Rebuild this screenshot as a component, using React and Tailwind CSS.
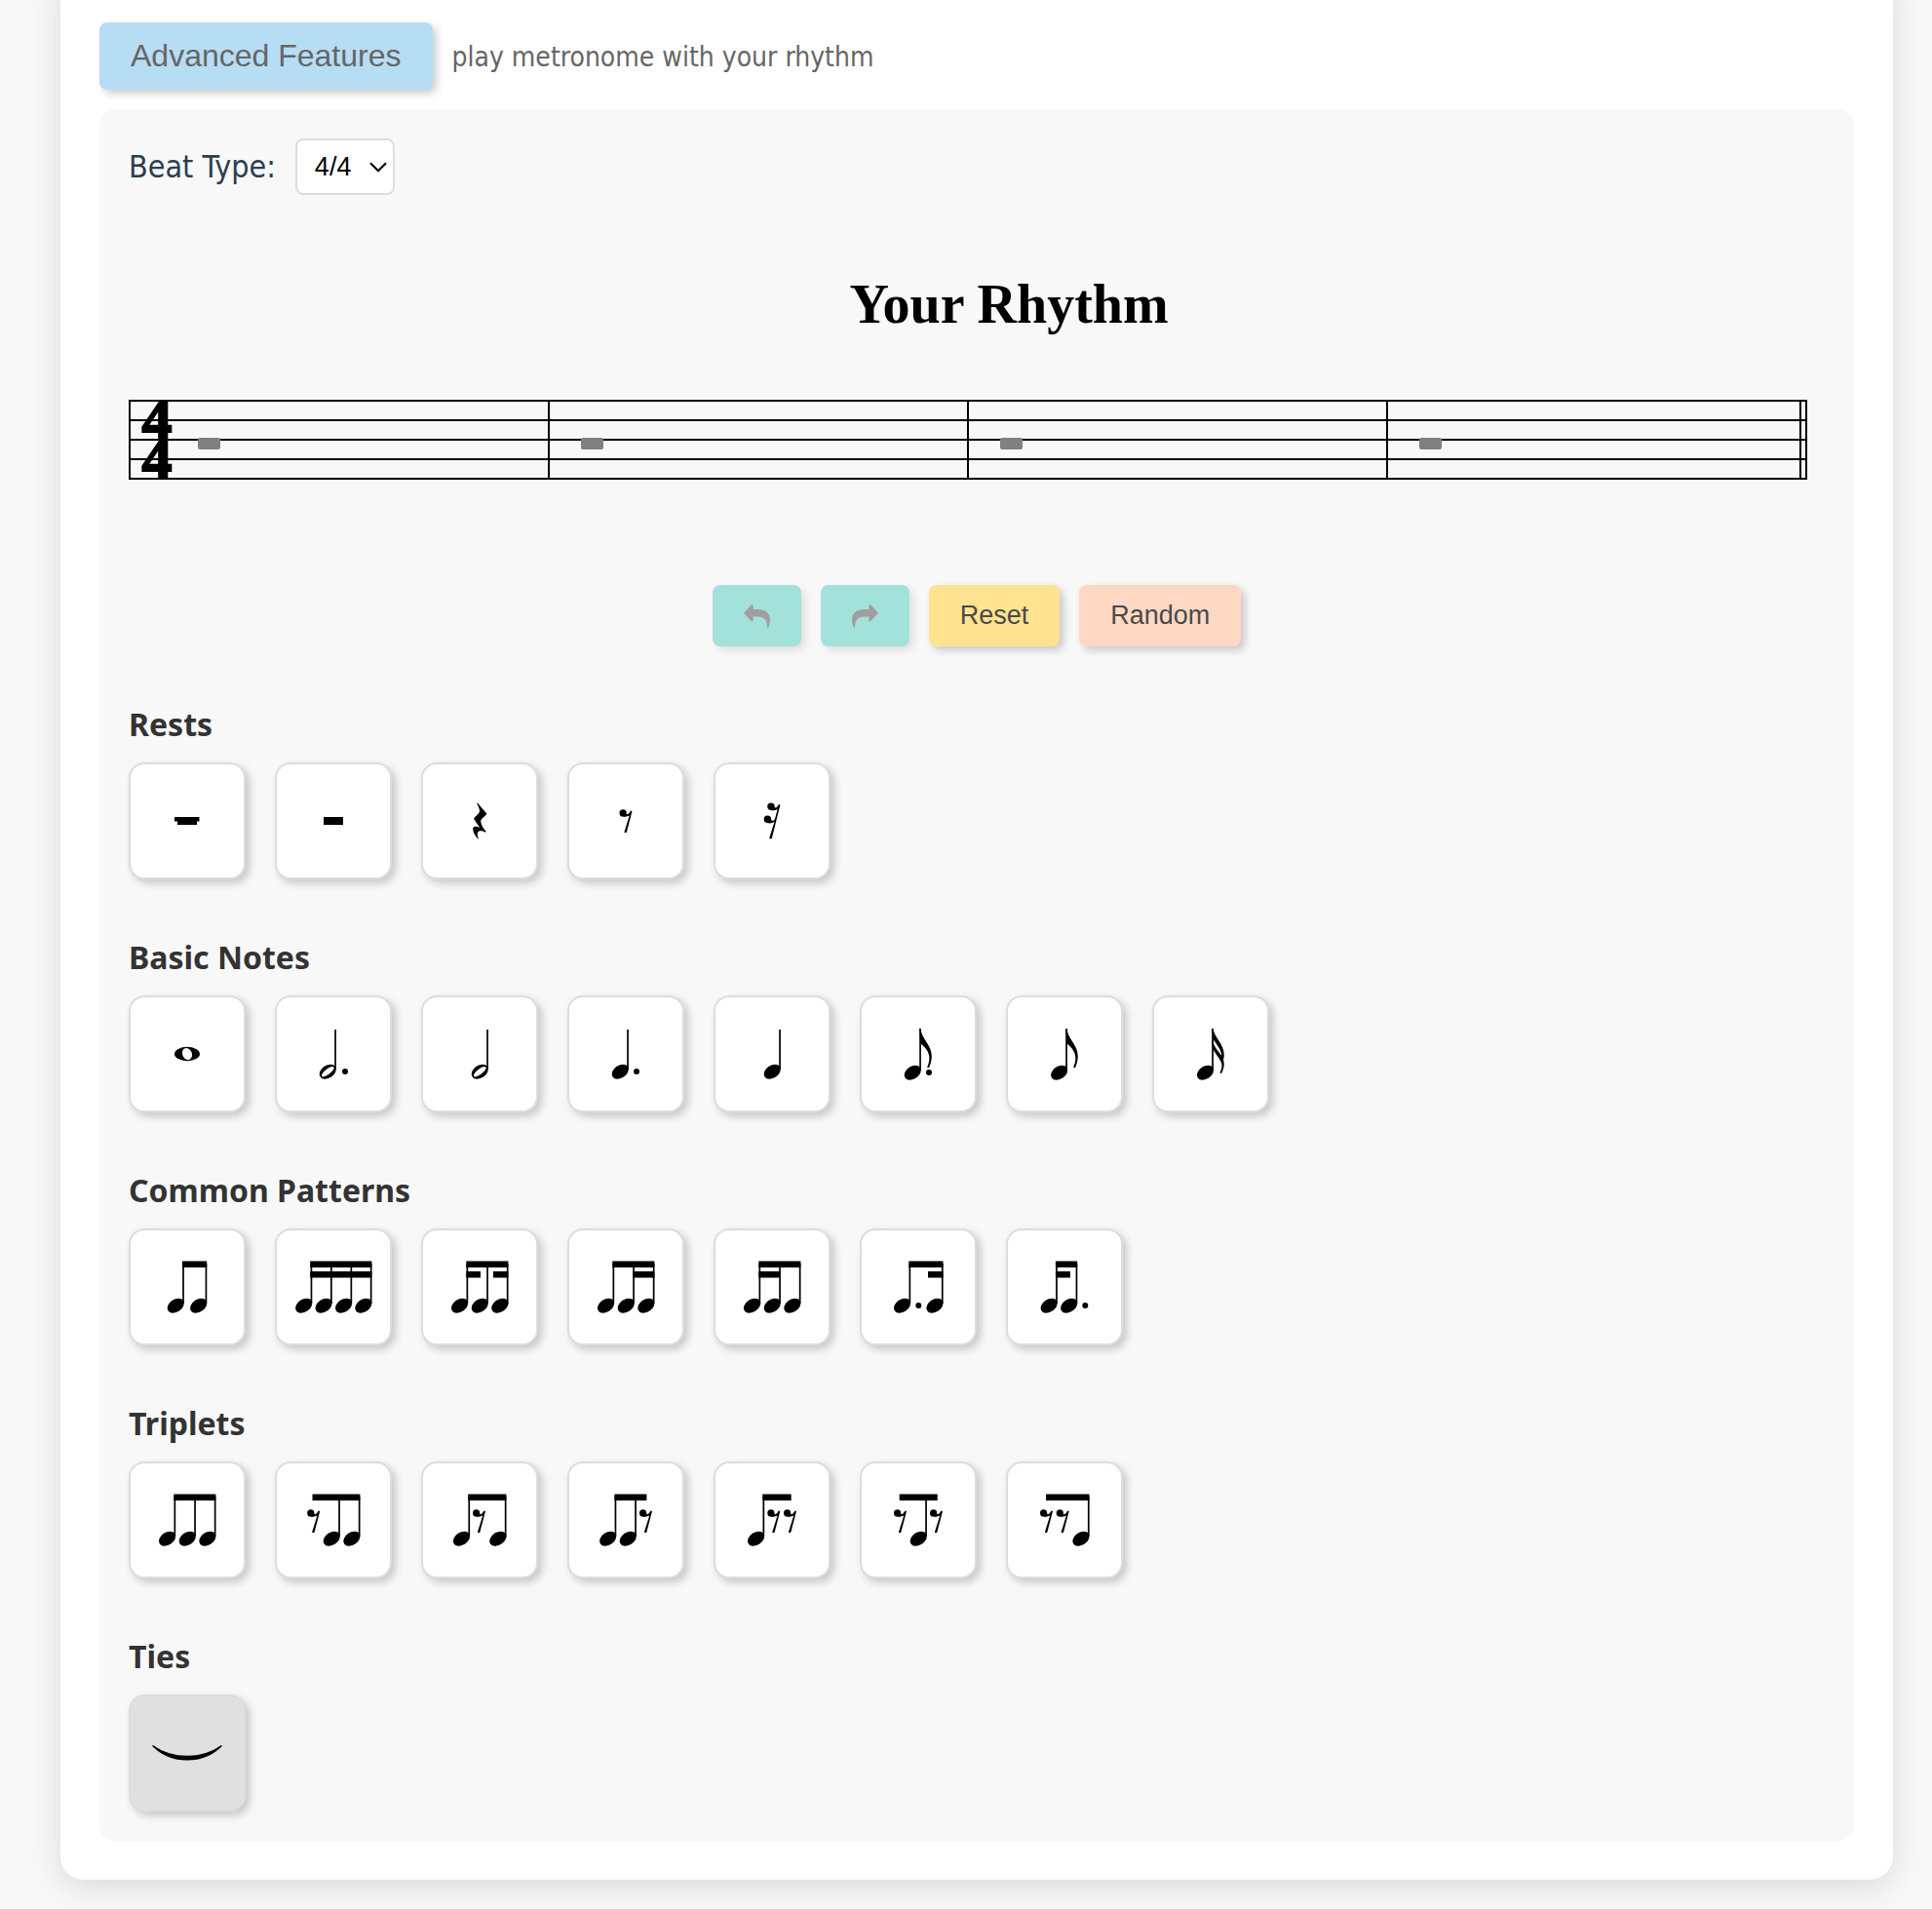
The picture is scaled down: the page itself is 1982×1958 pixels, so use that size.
import { useState } from "react";

// ---- notation primitives, all drawn on a 120x120 tile ----

function Head({ x, y = 79, hollow = false }) {
  return (
    <g transform={`translate(${x + 0.3} ${y + 0.2})`}>
      <ellipse rx="9.4" ry="6.5" transform="rotate(-34)" />
      {hollow && <ellipse rx="7.8" ry="2.7" transform="rotate(-38)" fill="#fff" />}
    </g>
  );
}

function Stem({ x, top = 36, bottom = 77 }) {
  return <rect x={x + 7.2} y={top} width="1.7" height={bottom - top} />;
}

function Dot({ x, y = 79 }) {
  return <circle cx={x} cy={y} r="3" />;
}

function EighthRest({ x, y = 49 }) {
  return (
    <g transform={`translate(${x} ${y})`}>
      <circle cx="3.6" cy="3.9" r="3.6" />
      <path d="M11.5 1.6 L13 2 L7.3 23.7 Q6 24.5 4.9 23.5 L10.2 6.6 Q7 8.4 3.4 7.4 Q6.4 6.6 7.1 4.2 Q8.4 7 11.5 1.6 Z" />
    </g>
  );
}

function Beam({ from, to, second = false }) {
  return <rect x={from} y={second ? 44 : 33.5} width={to - from} height="6.5" />;
}

// heads / rests / dots are x positions; beam and subs are [from, to] pairs
function Beamed({ heads, rests = [], dots = [], beam, subs = [] }) {
  return (
    <>
      {heads.map((x) => (
        <g key={x}>
          <Head x={x} />
          <Stem x={x} />
        </g>
      ))}
      {rests.map((x) => <EighthRest key={x} x={x} />)}
      {dots.map((x) => <Dot key={x} x={x} />)}
      <Beam from={beam[0]} to={beam[1]} />
      {subs.map(([from, to]) => <Beam key={from} from={from} to={to} second />)}
    </>
  );
}

const eighthFlag = "M61.3 34 H62.6 C63.2 45 73.8 50 73.8 62.5 C73.8 66.5 72.6 70 71.4 73.6 Q70.2 74.8 69.2 73.6 C70.8 70 71.8 66 71.2 62 C70 56 66 52 62.6 49.5 Z";

const sections = [
  {
    title: "Rests",
    items: [
      { name: "Whole rest", art: <path d="M47 56 H72.5 V60.5 H70 V64 H50 V60.5 H47 Z" /> },
      { name: "Half rest", art: <rect x="50" y="56" width="20" height="8" /> },
      {
        name: "Quarter rest",
        art: <path d="M57.9 41.6 C61 45 64 49 67.4 52.4 C66 55.5 61.7 57 61.2 60 C61.2 63 63.7 68 66.7 70.7 L65.7 71.8 C63 70 59.4 69.8 58.2 71.5 C57.2 73.5 58 76 58.9 78 L58.4 78.4 C55.4 75.5 53 71 53.2 67.5 C53.4 65 57.5 65.2 60.2 67 C58.5 64 56 61 54 57.8 C55.5 55 59.6 53 60 50 C60 47 58.5 44.5 57.2 42.2 Z" />,
      },
      { name: "Eighth rest", art: <EighthRest x={53.5} y={48} /> },
      {
        name: "Sixteenth rest",
        art: (
          <>
            <circle cx="59" cy="45.3" r="3.7" />
            <circle cx="55.4" cy="58.3" r="3.7" />
            <path d="M66.9 43 L68.4 43.4 L59.8 77.9 Q58.4 78.8 57.2 77.7 L62.4 61 Q58.6 63.2 55 61.9 Q58.6 61 59 58.6 Q60.6 61.6 63 58 L65.6 48 Q62 50 58.8 48.9 Q61.8 48.2 62.6 45.6 Q64 48.4 66.9 43 Z" />
          </>
        ),
      },
    ],
  },
  {
    title: "Basic Notes",
    items: [
      {
        name: "Whole note",
        art: (
          <>
            <ellipse cx="60" cy="60" rx="13" ry="7.2" />
            <ellipse cx="60" cy="60" rx="4.9" ry="6.1" transform="rotate(-22 60 60)" fill="#fff" />
          </>
        ),
      },
      { name: "Dotted half note", art: <><Head x={54} y={78} hollow /><Stem x={54} top={35} bottom={76} /><Dot x={72} y={78} /></> },
      { name: "Half note", art: <><Head x={60} y={78} hollow /><Stem x={60} top={35} bottom={76} /></> },
      { name: "Dotted quarter note", art: <><Head x={54} y={78} /><Stem x={54} top={35} bottom={76} /><Dot x={71} y={78} /></> },
      { name: "Quarter note", art: <><Head x={60} y={78} /><Stem x={60} top={35} bottom={76} /></> },
      { name: "Dotted eighth note", art: <><Head x={54} /><Stem x={54} top={34} /><path d={eighthFlag} /><Dot x={71} /></> },
      { name: "Eighth note", art: <><Head x={54.4} /><Stem x={54} top={34} /><path d={eighthFlag} /></> },
      {
        name: "Sixteenth note",
        art: (
          <>
            <Head x={54.2} />
            <Stem x={54} top={34} />
            <path d="M61.3 34 H62.6 C63.2 43 73.8 49 73.8 61.5 Q73.6 64.5 72.6 67 L71 65 C72.6 57 66 50.5 62.6 45 Z" />
            <path d="M61.3 46.5 H62.6 C63.2 54 69 57.5 71.8 63 C74.8 69 74 73.5 71.6 79.2 Q70.4 80.6 69.6 79.2 C71 76 71.8 73 71.4 70.5 C70 64.5 65 61 62.6 55 Z" />
          </>
        ),
      },
    ],
  },
  {
    title: "Common Patterns",
    items: [
      { name: "Two eighths", art: <Beamed heads={[48, 71.4]} beam={[55, 80.2]} /> },
      { name: "Four sixteenths", art: <Beamed heads={[29.4, 49.8, 70.3, 90.6]} beam={[36.2, 99.4]} subs={[[36.2, 99.4]]} /> },
      { name: "Sixteenth, eighth, sixteenth", art: <Beamed heads={[39.3, 60, 80.6]} beam={[46.3, 89.4]} subs={[[46.3, 61], [74, 89.4]]} /> },
      { name: "Eighth, two sixteenths", art: <Beamed heads={[39.3, 60, 80.6]} beam={[46.3, 89.4]} subs={[[67, 89.4]]} /> },
      { name: "Two sixteenths, eighth", art: <Beamed heads={[39.3, 60, 80.6]} beam={[46.3, 89.4]} subs={[[46.3, 68.4]]} /> },
      { name: "Dotted eighth, sixteenth", art: <Beamed heads={[43.3, 76.7]} dots={[60.3]} beam={[50.3, 85.5]} subs={[[70, 85.5]]} /> },
      { name: "Sixteenth, dotted eighth", art: <Beamed heads={[43.9, 64.4]} dots={[81.3]} beam={[50.9, 73.2]} subs={[[50.9, 66]]} /> },
    ],
  },
  {
    title: "Triplets",
    items: [
      { name: "Triplet", art: <Beamed heads={[39.3, 60, 80.6]} beam={[46.3, 89.4]} /> },
      { name: "Rest, note, note", art: <Beamed heads={[58, 78.6]} rests={[33.2]} beam={[38.5, 87.4]} /> },
      { name: "Note, rest, note", art: <Beamed heads={[41.2, 78.6]} rests={[53]} beam={[48.2, 87.4]} /> },
      { name: "Note, note, rest", art: <Beamed heads={[41.4, 62]} rests={[74]} beam={[48.4, 81.4]} /> },
      { name: "Note, rest, rest", art: <Beamed heads={[43.3]} rests={[55.3, 72]} beam={[50.3, 79.7]} /> },
      { name: "Rest, note, rest", art: <Beamed heads={[60]} rests={[35, 72]} beam={[40.7, 79.7]} /> },
      { name: "Rest, rest, note", art: <Beamed heads={[76.7]} rests={[35, 51.7]} beam={[41, 85.5]} /> },
    ],
  },
  {
    title: "Ties",
    items: [
      {
        name: "Tie",
        active: true,
        art: <path d="M25 52.7 C45 67 75 67 95 52.7 C76 71.5 44 71.5 25 52.7 Z" stroke="#000" strokeWidth="1.4" strokeLinejoin="round" />,
      },
    ],
  },
];

function Tile({ name, art, active }) {
  return (
    <button
      type="button"
      aria-label={name}
      className={`h-[120px] w-[120px] rounded-2xl border-2 border-[#ddd] shadow-[4px_4px_8px_rgba(0,0,0,0.2)] ${active ? "bg-[#e0e0e0]" : "bg-white"}`}
    >
      <svg viewBox="2 2 116 116" className="block h-full w-full" aria-hidden="true">{art}</svg>
    </button>
  );
}

function Staff() {
  return (
    <svg viewBox="0 0 1722 82" className="block w-full overflow-visible" role="img" aria-label="Four empty measures">
      {[0, 20, 40, 60, 80].map((y) => <rect key={y} x="0" y={y} width="1722" height="2" />)}
      {[0, 430, 860, 1290, 1714, 1720].map((x) => <rect key={x} x={x} y="0" width="2" height="82" />)}
      {[71, 464, 894, 1324].map((x) => <rect key={x} x={x} y="39" width="23" height="12" rx="2" fill="#808080" />)}
      <g fontFamily="'Liberation Serif', serif" fontWeight="700" fontSize="62" textAnchor="middle" stroke="#000" strokeWidth="2">
        <text x="29" y="41">4</text>
        <text x="29" y="81">4</text>
      </g>
    </svg>
  );
}

function ArrowIcon({ flip }) {
  return (
    <svg viewBox="0 0 27 24" className={`h-6 w-[27px] ${flip ? "-scale-x-100" : ""}`} fill="#9f9f9f" aria-hidden="true">
      <path d="M0 8.7 L7.5 0.6 Q9.6 -0.8 9.6 1.6 V5 H14 C22 5 27 9 27 15.5 C27 19 26 22 25 24 L24 23.8 C24.3 16 21 12.4 14 12.4 H9.6 V15.9 Q9.6 18.3 7.5 16.8 Z" />
    </svg>
  );
}

const actionButton = "flex h-[63px] items-center rounded-lg px-8 text-[27px] leading-[31px] text-[#4a4a4a]";

export default function App() {
  const [beatType, setBeatType] = useState("4/4");

  return (
    <div className="overflow-hidden bg-[#f8f8f8] pr-10 pb-[30px] pl-[62px] font-['DejaVu_Sans_Condensed','Noto_Sans',sans-serif]">
      <main className="-mt-10 rounded-3xl bg-white px-10 pt-[63px] pb-10 shadow-[0_8px_32px_rgba(0,0,0,0.12)]">
        <div className="mb-5 flex items-baseline gap-5">
          <button type="button" className="rounded-lg bg-[#b7ddf4] px-8 py-4 font-['Liberation_Sans',sans-serif] text-[32px] leading-[37px] text-[#666] shadow-[4px_4px_8px_rgba(0,0,0,0.2)]">
            Advanced Features
          </button>
          <span className="text-[28px] leading-[34px] text-[#666]">play metronome with your rhythm</span>
        </div>

        <div className="rounded-2xl bg-[#f8f8f8] p-[30px]">
          <div className="flex items-center gap-5">
            <label htmlFor="beat-type" className="text-[32px] leading-[39px] text-[#2c3e50]">Beat Type:</label>
            <div className="relative font-['Liberation_Sans',sans-serif]">
              <select
                id="beat-type"
                value={beatType}
                onChange={(e) => setBeatType(e.target.value)}
                className="block h-[58px] w-[102px] appearance-none rounded-lg border-2 border-[#ddd] bg-white pl-[18px] text-[27px] leading-[31px] text-black"
              >
                <option>4/4</option>
                <option>3/4</option>
                <option>2/4</option>
              </select>
              <svg viewBox="0 0 18 11" className="pointer-events-none absolute top-6 right-2 h-[11px] w-[18px]" fill="none" stroke="#000" strokeWidth="2.2" aria-hidden="true">
                <path d="M1 1.2 L9 9.2 L17 1.2" />
              </svg>
            </div>
          </div>

          <h1 className="mt-20 pl-[66px] text-center font-['Liberation_Serif',serif] text-[56px] leading-[64px] font-bold text-black">Your Rhythm</h1>

          <div className="mt-[66px] pr-[18px]">
            <Staff />
          </div>

          <div className="mt-[108px] flex justify-center gap-5 font-['Liberation_Sans',sans-serif]">
            <button type="button" disabled aria-label="Undo" className={`${actionButton} bg-[#a3e2db] shadow-[4px_4px_8px_rgba(0,0,0,0.1)]`}>
              <ArrowIcon />
            </button>
            <button type="button" disabled aria-label="Redo" className={`${actionButton} bg-[#a3e2db] shadow-[4px_4px_8px_rgba(0,0,0,0.1)]`}>
              <ArrowIcon flip />
            </button>
            <button type="button" className={`${actionButton} bg-[#ffe390] shadow-[4px_4px_8px_rgba(0,0,0,0.2)]`}>Reset</button>
            <button type="button" className={`${actionButton} bg-[#ffd8c4] shadow-[4px_4px_8px_rgba(0,0,0,0.2)]`}>Random</button>
          </div>

          {sections.map((section) => (
            <section key={section.title} className="mt-[60px]">
              <h2 className="mb-5 font-['Noto_Sans',sans-serif] text-[32px] leading-[39px] font-bold text-[#333]">{section.title}</h2>
              <div className="flex flex-wrap gap-[30px]">
                {section.items.map((item) => <Tile key={item.name} {...item} />)}
              </div>
            </section>
          ))}
        </div>
      </main>
    </div>
  );
}
